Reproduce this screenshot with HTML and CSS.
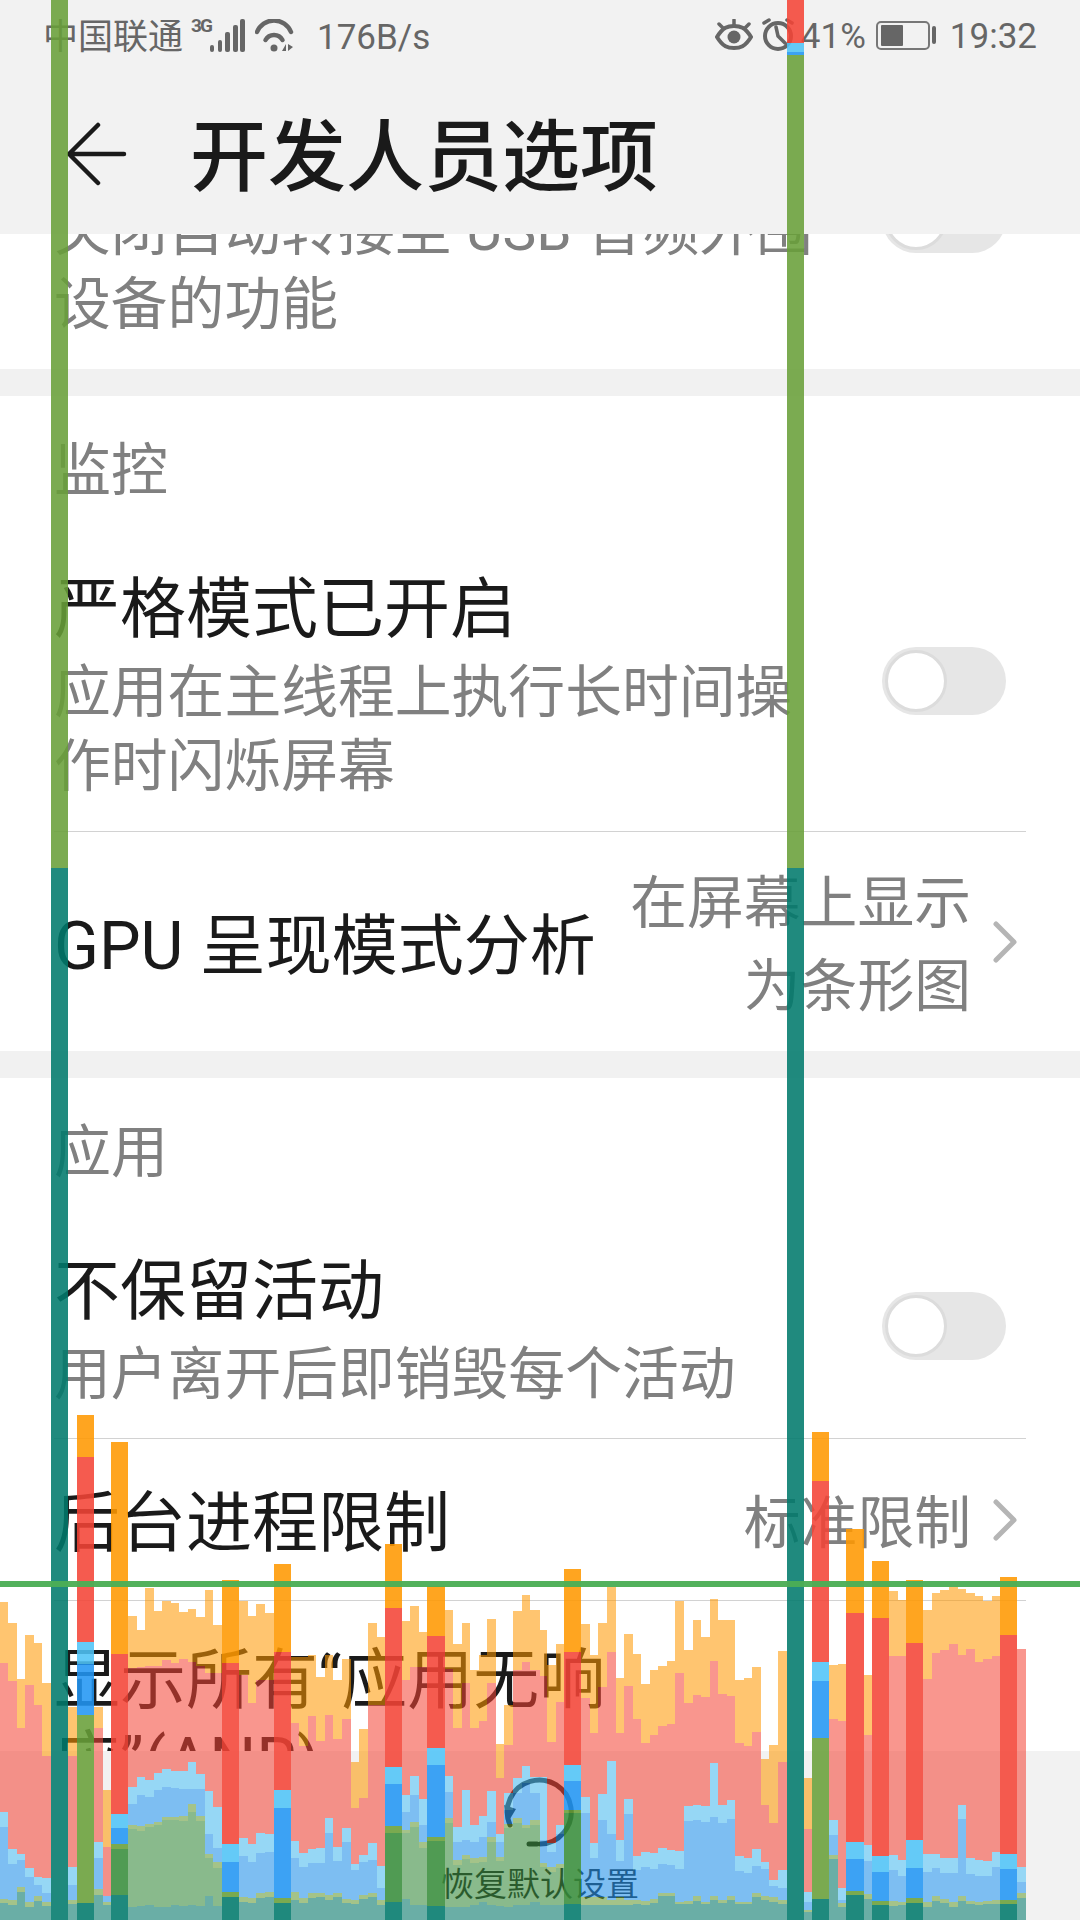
FILE: index.html
```html
<!DOCTYPE html>
<html lang="zh-CN">
<head>
<meta charset="utf-8">
<title>开发人员选项</title>
<link rel="stylesheet" href="styles.css">
</head>
<body>
<div class="phone">
  <header class="appbar">
    <div class="status">
      <div class="status-left">
        <span class="carrier">中国联通</span>
        <span class="net">3G</span>
        <svg class="signal" width="36" height="34" viewBox="0 0 36 34"><rect x="0" y="26" width="4" height="7" rx="2"/><rect x="8" y="21" width="4" height="12" rx="2"/><rect x="15" y="13" width="5" height="20" rx="2"/><rect x="23" y="6" width="5" height="27" rx="2"/><rect x="30" y="0" width="5" height="33" rx="2"/></svg>
        <svg class="wifi" width="39" height="34" viewBox="0 0 39 34"><path class="stroke" d="M2 13A18.3 18.3 0 0 1 36 13"/><path class="stroke" d="M10.500 21A9.700 9.700 0 0 1 27.500 21"/><circle cx="19" cy="29" r="3.500"/><path d="M27 32l4-7v7zM33 25l5 3-5 4z"/></svg>
        <span class="speed">176B/s</span>
      </div>
      <div class="status-right">
        <svg class="eye" width="38" height="32" viewBox="0 0 38 32"><path class="stroke" d="M2 18C8 8 13 7 19 7s11 1 17 11C30 28 25 29 19 29S8 28 2 18Z"/><circle cx="19" cy="18" r="6.500"/><path class="stroke thin" d="M19 1v5M4 5l4 4M34 5l-4 4"/></svg>
        <svg class="alarm" width="36" height="34" viewBox="0 0 36 34"><circle class="stroke" cx="17" cy="19" r="13"/><path class="stroke thin" d="M15 10l2 9 7 7M3 6l5-3M31 6l-5-3"/></svg>
        <span class="percent">41%</span>
        <svg class="battery" width="62" height="30" viewBox="0 0 62 30"><rect class="shell" x="1" y="1" width="52" height="27" rx="4"/><rect x="5" y="4" width="22" height="21" rx="1"/><rect x="56" y="5" width="4" height="18" rx="2"/></svg>
        <span class="clock">19:32</span>
      </div>
    </div>
    <div class="toolbar">
      <svg class="back" width="60" height="64" viewBox="0 0 60 64"><path d="M31 3L2 32l29 29M2 32h55"/></svg>
      <h1 class="page-title">开发人员选项</h1>
    </div>
  </header>

  <main class="list">
    <section class="group group-clipped">
      <div class="row row-text">
        <div class="row-copy">
          <div class="row-title">停用 USB 音频路由</div>
          <div class="row-sub">关闭自动转接至 USB 音频外围设备的功能</div>
        </div>
        <span class="toggle"><span class="thumb"></span></span>
      </div>
    </section>

    <section class="group">
      <h2 class="group-title">监控</h2>
      <div class="row row-text row-line">
        <div class="row-copy">
          <div class="row-title">严格模式已开启</div>
          <div class="row-sub">应用在主线程上执行长时间操作时闪烁屏幕</div>
        </div>
        <span class="toggle"><span class="thumb"></span></span>
      </div>
      <div class="row row-nav row-tall">
        <div class="row-title nav-title">GPU 呈现模式分析</div>
        <div class="row-value">在屏幕上显示为条形图</div>
        <svg class="chevron" width="24" height="42" viewBox="0 0 24 42"><path d="M3 3l18 18L3 39"/></svg>
      </div>
    </section>

    <section class="group">
      <h2 class="group-title">应用</h2>
      <div class="row row-text row-line row-compact">
        <div class="row-copy">
          <div class="row-title">不保留活动</div>
          <div class="row-sub">用户离开后即销毁每个活动</div>
        </div>
        <span class="toggle"><span class="thumb"></span></span>
      </div>
      <div class="row row-nav row-short row-line">
        <div class="row-title nav-title">后台进程限制</div>
        <div class="row-value">标准限制</div>
        <svg class="chevron" width="24" height="42" viewBox="0 0 24 42"><path d="M3 3l18 18L3 39"/></svg>
      </div>
      <div class="row row-anr">
        <div class="row-title anr-title">显示所有“应用无响应”(ANR)</div>
      </div>
    </section>
  </main>

  <footer class="footer">
    <svg class="spinner" width="74" height="74" viewBox="0 0 74 74"><path d="M7 50A32 32 0 1 1 37 69" class="arc"/><path d="M26 69h8" class="arc"/><path d="M1 30l12 4-9 15z" class="tip"/></svg>
    <div class="restore">恢复默认设置</div>
  </footer>

  <svg id="profile" class="profile" width="1080" height="1920" viewBox="0 0 1080 1920" aria-hidden="true"></svg>
</div>
<script src="profile.js"></script>
</body>
</html>
```

FILE: styles.css
```css
* { box-sizing: border-box; }
html, body { margin: 0; padding: 0; }
body { width: 1080px; height: 1920px; overflow: hidden; background: #fff; font-family: Roboto, "Noto Sans CJK SC", sans-serif; color: #1a1a1a; }
.phone { position: relative; width: 1080px; height: 1920px; overflow: hidden; display: flex; flex-direction: column; }

.appbar { position: relative; z-index: 1; height: 234px; flex: none; background: #f2f2f2; }
.status { height: 72px; display: flex; justify-content: space-between; align-items: center; padding: 0 43px 0 43px; color: #666; font-size: 35px; }
.status svg { fill: #666; display: block; flex: none; }
.status .stroke { fill: none; stroke: #666; stroke-width: 4; stroke-linecap: round; }
.status .thin { stroke-width: 3.500; }
.status-left, .status-right { display: flex; align-items: center; }
.carrier { width: 148px; padding-top: 4px; line-height: 44px; }
.net { width: 19px; height: 34px; margin-top: -6px; font-size: 19px; line-height: 19px; font-weight: 700; letter-spacing: -2px; }
.wifi { margin-left: 9px; }
.wifi .stroke { stroke-width: 4.500; }
.speed { margin-left: 23px; padding-top: 4px; line-height: 44px; }
.eye { margin-top: -2px; }
.alarm { margin-left: 8px; margin-top: -4px; }
.percent { margin-left: 4px; padding-top: 2px; line-height: 44px; }
.battery { margin-left: 10px; }
.battery .shell { fill: none; stroke: #777; stroke-width: 2; }
.clock { margin-left: 12px; padding-top: 2px; line-height: 44px; }

.toolbar { height: 162px; display: flex; align-items: center; padding-left: 67px; }
.back { flex: none; fill: none; stroke: #1a1a1a; stroke-width: 4.500; stroke-linecap: round; stroke-linejoin: round; margin-top: 1px; }
.page-title { margin: 12px 0 0 63px; font-size: 78px; line-height: 96px; font-weight: 500; color: #1a1a1a; }

.list { flex: none; height: 1517px; overflow: hidden; background: #f1f1f1; }
.group { background: #fff; margin-bottom: 27px; }
.group-clipped { margin-top: -188px; }
.group-title { margin: 0; padding: 38px 0 0 54px; font-size: 57px; line-height: 74px; font-weight: 400; color: #808080; }

.row { display: flex; align-items: center; margin: 0 54px; }
.row-text { padding: 60px 0 27px; }
.row-line { border-bottom: 1px solid #d2d2d2; }
.row-compact { padding-bottom: 26px; }
.row-copy { flex: none; width: 790px; }
.row-title { font-size: 66px; line-height: 84px; color: #1a1a1a; }
.row-sub { margin-top: 4px; font-size: 56.800px; line-height: 74px; color: #808080; }
.toggle { flex: none; width: 124px; height: 68px; margin: 0 20px 11px auto; padding: 3px; border-radius: 34px; background: #e6e6e6; }
.thumb { display: block; width: 62px; height: 62px; border-radius: 50%; background: #fff; border: 3px solid #dcdcdc; }

.row-tall { height: 219px; }
.row-short { height: 162px; }
.nav-title { flex: 1; padding-top: 10px; }
.row-value { flex: none; width: 350px; padding-top: 6px; text-align: right; font-size: 56.800px; line-height: 83px; color: #808080; }
.row-short .row-value { width: 240px; padding-top: 8px; }
.row-short .nav-title { padding-top: 8px; }
.chevron { flex: none; margin: 0 9px 0 22px; fill: none; stroke: #b5b5b5; stroke-width: 5; stroke-linecap: round; stroke-linejoin: round; }
.row-anr { padding-top: 39px; }
.anr-title { width: 640px; line-height: 82px; }

.footer { flex: none; height: 169px; background: #f2f2f2; display: flex; flex-direction: column; align-items: center; padding-top: 24px; }
.spinner { display: block; flex: none; }
.spinner .arc { fill: none; stroke: #1a1a1a; stroke-width: 5; stroke-linecap: round; }
.spinner .tip { fill: #1a1a1a; }
.restore { margin-top: 14px; font-size: 33px; line-height: 44px; color: #1a1a1a; }

.profile { position: absolute; left: 0; top: 0; z-index: 2; pointer-events: none; display: block; }
```

FILE: profile.js
```js
// GPU rendering profile overlay. Layers bottom-up are drawn as stacks of rects.
var NS = 'http://www.w3.org/2000/svg';
var svg = document.getElementById('profile');
var O = '#FF9800', R = '#F44336', L = '#4FC3F7', B = '#2196F3', G = '#689F38', D = '#388E3C', T = '#00796B';
var FAST = 0.56, JANK = 0.875;

function rect(x, y, w, h, fill, alpha) {
  if (h <= 0) return;
  var r = document.createElementNS(NS, 'rect');
  r.setAttribute('x', x); r.setAttribute('y', y);
  r.setAttribute('width', w); r.setAttribute('height', h);
  r.setAttribute('fill', fill); r.setAttribute('fill-opacity', alpha);
  r.setAttribute('shape-rendering', 'crispEdges');
  svg.appendChild(r);
}

// Light (fast frame) columns: [startZ, endZ, orange, red, ltblue, blue, ltgreen, (dkgreen), teal]
// z values are crop units: x = x0 + z / 3, y = 1580 + z / 3
var crops = [
  { x0: 0, cols: [
    [0,25,66,250,695,740,958,970],[25,50,128,302,808,852,960,975],[50,76,298,443,822,840,922,935],
    [76,101,165,315,864,892,965,980],[101,127,190,375,890,915,948,962],[127,153,308,527,895,938,965,978],
    [204,231,380,527,860,915,960,972],[282,309,380,445,785,835,928,945],[309,333,630,800,948,948,965,975],
    [384,410,108,265,620,672,735,748,980],[410,436,150,262,590,645,738,752,978],[436,461,25,258,600,652,732,742,975],
    [461,487,92,258,580,630,725,735,980],[487,512,62,240,567,620,710,720,980],[512,538,68,248,573,625,710,720,975],
    [538,563,95,238,572,628,708,722,978],[563,589,87,245,545,628,673,695,975],[589,614,110,258,582,628,708,722,978],
    [614,640,30,278,632,762,822,835,948],[640,666,135,280,682,805,847,865,978],
    [717,745,62,285,775,828,950,965],[745,768,108,368,792,845,955,968],[768,795,72,300,760,818,940,955],[795,822,100,300,762,815,935,950]
  ]},
  { x0: 270, cols: [
    [63,88,230,430,783,833,935,960],[88,113,230,497,818,860,955,970],[113,139,225,408,808,850,940,955],
    [139,164,290,483,805,850,938,950],[164,190,225,405,715,760,945,960],[190,215,300,476,800,842,938,952],
    [215,243,238,418,745,785,958,970],[243,268,545,683,852,870,960,972],[268,294,447,655,825,845,945,958],
    [294,320,128,375,790,840,938,950],[320,345,170,375,858,925,960,975],
    [396,421,123,300,645,695,750,760,958],[421,447,78,262,588,645,725,740,975],[447,472,155,262,657,735,785,805,975],
    [525,550,90,268,588,635,715,730,982],[550,575,192,445,740,785,840,855,980],[575,601,128,310,630,780,825,838,980],
    [601,627,270,445,735,785,835,848,975],[627,652,225,423,708,770,830,845,965],[652,678,118,310,632,725,770,785,975],
    [678,703,492,593,762,785,830,842,978],[703,729,375,495,640,690,733,745,980],[729,755,93,270,595,640,715,728,975],
    [755,780,45,245,558,610,735,745,975],[780,810,90,270,590,640,720,735,965]
  ]},
  { x0: 540, cols: [
    [0,22,150,288,590,780,850,862,975],[22,47,255,485,790,815,860,875,975],[47,72,192,365,735,762,852,865,975],
    [123,149,132,355,652,698,950,975],[149,175,225,458,790,835,950,975],[175,201,130,320,642,720,950,975],
    [201,228,22,215,543,762,960,975],[228,252,295,458,780,843,950,975],[252,279,163,318,657,702,960,975],
    [279,304,222,418,828,870,960,972],[304,330,312,488,815,862,962,975],[330,355,270,465,820,867,958,970],
    [355,381,258,437,805,852,938,948],[381,406,243,432,810,855,938,948],[406,432,62,278,813,866,965,972],
    [432,459,210,368,678,722,962,972],[459,484,120,345,675,720,948,962],[484,510,170,350,678,725,965,972],
    [510,534,57,243,548,710,948,960],[534,560,120,342,675,728,960,970],[560,585,120,348,660,717,948,960],
    [585,611,300,488,828,872,965,972],[611,637,295,497,835,878,965,972],[637,663,262,456,807,858,938,950],
    [663,688,537,675,847,867,948,960],[688,714,495,728,900,918,952,965],[714,741,213,547,870,925,960,972],
    [792,816,595,748,937,965,990,995]
  ]},
  { x0: 810, cols: [
    [57,84,255,418,720,765,825,838],[84,108,252,423,925,960,968,980],[162,186,285,465,795,843,942,956],
    [237,263,33,228,825,870,963,978],[263,288,60,228,840,888,965,975],
    [339,366,90,297,822,876,965,980],[366,390,38,218,822,865,948,962],[390,417,30,210,834,879,956,970],
    [417,443,20,192,834,879,965,980],[443,468,26,225,675,717,948,962],[468,495,39,207,834,882,962,972],
    [495,520,48,246,840,888,965,975],[520,546,62,237,843,888,963,973],[546,570,48,228,816,861,960,972],
    [621,648,207,207,861,906,938,953]
  ]}
];

crops.forEach(function (crop) {
  crop.cols.forEach(function (c) {
    var x = crop.x0 + c[0] / 3, w = (c[1] - c[0]) / 3;
    var tops = c.slice(2).map(function (z) { return 1580 + z / 3; });
    var fills = tops.length === 7 ? [O, R, L, B, G, D, T] : [O, R, L, B, G, T];
    tops.forEach(function (y, i) {
      var next = i + 1 < tops.length ? tops[i + 1] : 1920;
      rect(x, y, w, next - y, fills[i], FAST);
    });
  });
});

// Janky frame bars: [x, width, stack of [colour, top]...]
var bars = [
  [77,17,[O,1415],[R,1457],[L,1642],[B,1664],[G,1715],[T,1903]],
  [111,17,[O,1442],[R,1654],[L,1814],[B,1828],[G,1844],[D,1849],[T,1895]],
  [222,17,[O,1580],[R,1663],[L,1844],[B,1862],[G,1892],[T,1897]],
  [274,17,[O,1564],[R,1652],[L,1790],[B,1808],[G,1898],[T,1903]],
  [385,17,[O,1544],[R,1608],[L,1767],[B,1784],[G,1826],[D,1833],[T,1902]],
  [427,18,[O,1586],[R,1636],[L,1748],[B,1765],[G,1837],[D,1841],[T,1906]],
  [564,17,[O,1569],[R,1652],[L,1765],[B,1781],[G,1810],[D,1813],[T,1904]],
  [812,17,[O,1432],[R,1481],[L,1662],[B,1681],[G,1738],[T,1899]],
  [846,18,[O,1529],[R,1613],[L,1842],[B,1859],[G,1891],[T,1895]],
  [872,17,[O,1561],[R,1618],[L,1856],[B,1872],[G,1901],[T,1905]],
  [906,17,[O,1580],[R,1643],[L,1840],[B,1868],[G,1898],[T,1903]],
  [1000,17,[O,1577],[R,1635],[L,1854],[B,1869],[G,1900],[T,1904]],
  [51,17,[G,0],[T,868]],
  [787,17,[R,0],[L,43],[B,52],[G,55],[T,868]]
];

bars.forEach(function (b) {
  var stack = b.slice(2);
  stack.forEach(function (s, i) {
    var next = i + 1 < stack.length ? stack[i + 1][1] : 1920;
    rect(b[0], s[1], b[1], next - s[1], s[0], JANK);
  });
});

rect(0, 1581, 1080, 6, '#4CAE55', 0.96);
```
